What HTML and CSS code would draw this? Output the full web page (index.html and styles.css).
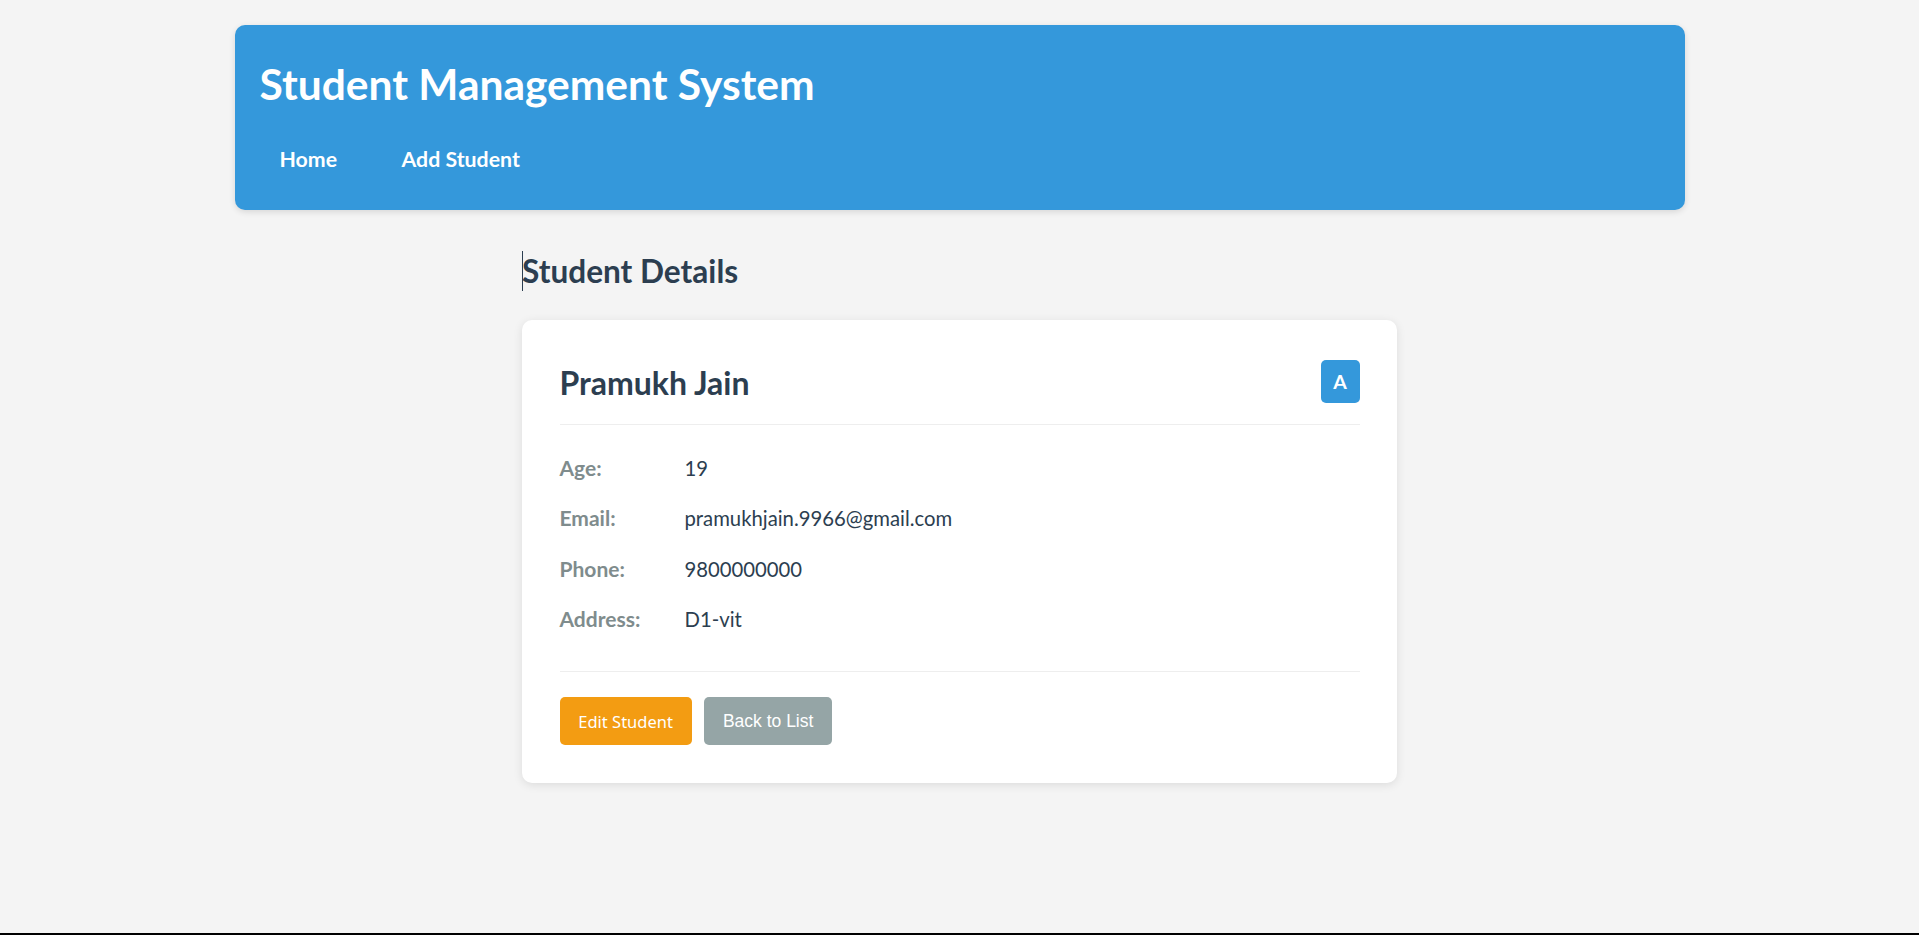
FILE: index.html
```html
<!DOCTYPE html>
<html lang="en">
<head>
<meta charset="utf-8">
<title>Student Details</title>
<link rel="stylesheet" href="styles.css">
</head>
<body>
<div class="container">
  <header class="site-header">
    <h1 class="site-title">Student Management System</h1>
    <nav class="nav">
      <a class="nav-link" href="#">Home</a>
      <a class="nav-link" href="#">Add Student</a>
    </nav>
  </header>

  <main class="main">
    <h2 class="page-title">Student Details</h2>
    <section class="card">
      <div class="card-head">
        <h3 class="student-name">Pramukh Jain</h3>
        <span class="badge">A</span>
      </div>
      <div class="details">
        <div class="row"><span class="label">Age:</span><span class="value">19</span></div>
        <div class="row"><span class="label">Email:</span><span class="value">pramukhjain.9966@gmail.com</span></div>
        <div class="row"><span class="label">Phone:</span><span class="value">9800000000</span></div>
        <div class="row"><span class="label">Address:</span><span class="value">D1-vit</span></div>
      </div>
      <div class="actions">
        <a class="btn btn-edit" href="#">Edit Student</a>
        <button class="btn btn-back" type="button">Back to List</button>
      </div>
    </section>
  </main>
</div>
<div class="screen-edge"></div>
</body>
</html>
```

FILE: styles.css
```css
* { box-sizing: border-box; }

html, body {
  margin: 0;
  padding: 0;
}

body {
  background: #f4f4f4;
  font-family: Lato, "Noto Sans", sans-serif;
  color: #2c3e50;
  min-height: 935px;
}

.container {
  width: 1450px;
  margin: 0 auto;
  padding-top: 25px;
}

.site-header {
  background: #3498db;
  color: #fff;
  border-radius: 10px;
  padding: 25px;
  height: 185px;
  box-shadow: 0 2px 6px rgba(0, 0, 0, 0.12);
}

.site-title {
  margin: 6px 0 0;
  font-size: 42.5px;
  line-height: 56px;
  font-weight: 700;
}

.nav {
  display: flex;
  gap: 24.5px;
  padding-top: 21.5px;
}

.nav-link {
  color: #fff;
  text-decoration: none;
  font-weight: 700;
  font-size: 21.3px;
  line-height: 26px;
  padding: 12.5px 20px;
}

.main {
  width: 875px;
  margin: 0 auto;
}

.page-title {
  position: relative;
  margin: 41px 0 29px;
  font-size: 31.6px;
  line-height: 40px;
  font-weight: 700;
  color: #2c3e50;
}

.page-title::before {
  content: "";
  position: absolute;
  left: 0;
  top: 0;
  width: 1px;
  height: 40px;
  background: #2c3e50;
}

.card {
  background: #fff;
  border-radius: 10px;
  padding: 37.5px;
  box-shadow: 0 2px 10px rgba(0, 0, 0, 0.1);
}

.card-head {
  display: flex;
  justify-content: space-between;
  align-items: flex-start;
  height: 67.5px;
  padding-bottom: 20px;
  border-bottom: 1px solid #eee;
}

.student-name {
  margin: 0;
  padding-top: 2px;
  font-size: 32px;
  line-height: 46px;
  font-weight: 700;
  color: #2c3e50;
}

.badge {
  display: flex;
  align-items: center;
  justify-content: center;
  margin-top: 2.5px;
  width: 39px;
  height: 43px;
  background: #3498db;
  color: #fff;
  border-radius: 5px;
  font-weight: 700;
  font-size: 19.5px;
}

.details {
  display: flex;
  flex-direction: column;
  gap: 18.67px;
  padding: 26.5px 0 35.6px;
}

.row {
  display: flex;
  font-size: 20.3px;
  line-height: 32px;
}

.label {
  width: 125px;
  flex: none;
  font-weight: 700;
  font-size: 21px;
  color: #7f8c8d;
}

.value {
  color: #2c3e50;
}

.actions {
  display: flex;
  gap: 12.5px;
  padding-top: 25px;
  border-top: 1px solid #eee;
}

.btn {
  display: inline-block;
  border: none;
  border-radius: 5px;
  color: #fff;
  line-height: 23px;
  padding: 12.5px 18.75px;
  text-decoration: none;
  cursor: pointer;
}

.btn-edit {
  background: #f39c12;
  font-family: "Noto Sans", sans-serif;
  font-size: 16.5px;
}

.btn-back {
  background: #95a5a6;
  font-family: "Liberation Sans", Arial, sans-serif;
  font-size: 17.5px;
}

.screen-edge {
  position: fixed;
  left: 0;
  right: 0;
  bottom: 0;
  height: 2px;
  background: #000;
}
```
